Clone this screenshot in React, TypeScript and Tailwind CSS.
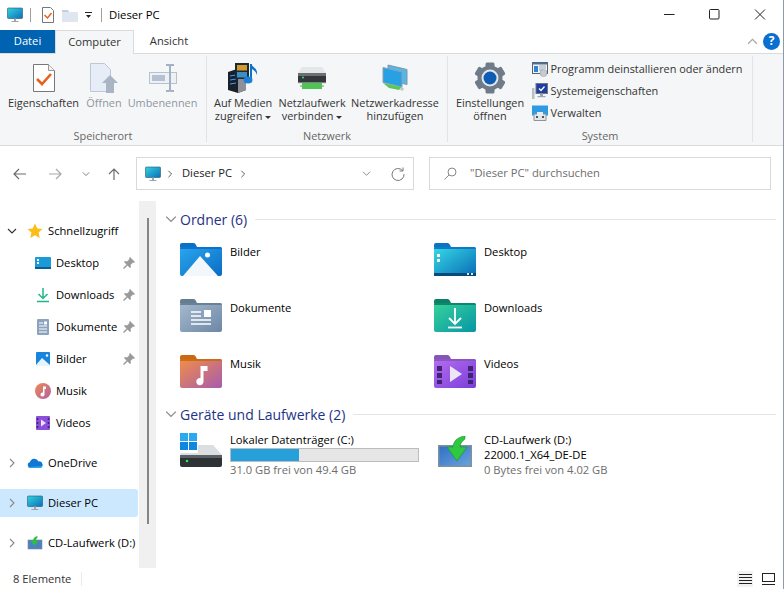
import type { ReactNode } from "react";

const ui = "font-['Open_Sans','Noto_Sans',sans-serif]";

function Monitor({ size = 16 }: { size?: number }) {
  return (
    <svg width={size} height={size} viewBox="0 0 16 16" className="shrink-0">
      <defs>
        <linearGradient id="mon" x1="0" y1="0" x2="1" y2="1">
          <stop offset="0" stopColor="#33d3e0" />
          <stop offset="1" stopColor="#0b6fb8" />
        </linearGradient>
      </defs>
      <rect x="0.5" y="1" width="15" height="10.5" rx="0.8" fill="url(#mon)" stroke="#27566f" strokeWidth="0.6" />
      <rect x="7" y="11.5" width="2" height="2.5" fill="#9aa5ad" />
      <rect x="4.5" y="14" width="7" height="1" fill="#9aa5ad" />
    </svg>
  );
}

function Folder({ tab, from, to, children, id }: { tab: string; from: string; to: string; children?: ReactNode; id: string }) {
  return (
    <svg width="42" height="33" viewBox="0 0 42 33" className="shrink-0">
      <defs>
        <linearGradient id={id} x1="0" y1="0" x2="1" y2="1">
          <stop offset="0" stopColor={from} />
          <stop offset="1" stopColor={to} />
        </linearGradient>
      </defs>
      <path d="M0 2a2 2 0 0 1 2-2h11a3 3 0 0 1 3 2l1 2h-17z" fill={tab} />
      <path d="M0 5a1 1 0 0 1 1-1h39a2 2 0 0 1 2 2v25a2 2 0 0 1-2 2h-38a2 2 0 0 1-2-2z" fill={`url(#${id})`} />
      <path d="M0 5a1 1 0 0 1 1-1h39a2 2 0 0 1 2 2h-42z" fill={tab} opacity="0.9" />
      {children}
    </svg>
  );
}

function Chevron({ dir, color = "#8a8a8a", size = 10 }: { dir: "right" | "down" | "up" | "left"; color?: string; size?: number }) {
  const d = {
    right: "M3 1l4 4-4 4",
    down: "M1 3l4 4 4-4",
    up: "M1 7l4-4 4 4",
    left: "M7 1l-4 4 4 4",
  }[dir];
  return (
    <svg width={size} height={size} viewBox="0 0 10 10" className="shrink-0">
      <path d={d} fill="none" stroke={color} strokeWidth="1.1" />
    </svg>
  );
}

function Caret() {
  return <span className="ml-[3px] inline-block align-middle w-0 h-0 border-x-[3px] border-x-transparent border-t-[3px] border-t-[#333]" />;
}

function BigButton({ icon, lines, dim, caret, width = "" }: { icon: ReactNode; lines: string[]; dim?: boolean; caret?: boolean; width?: string }) {
  return (
    <div className={`flex flex-col items-center ${width} ${dim ? "text-[#8f979f]" : "text-[#333]"}`}>
      <div className="flex h-[32px] w-[32px] items-center justify-center">{icon}</div>
      <div className="mt-[2px] whitespace-nowrap text-center leading-[13px]">
        {lines[0]}
        {lines[1] && (
          <>
            <br />
            {lines[1]}
            {caret && <Caret />}
          </>
        )}
      </div>
    </div>
  );
}

function Group({ label, width, children }: { label: string; width: string; children: ReactNode }) {
  return (
    <div className={`${width} flex h-[86px] flex-col border-r border-[#e1e3e6]`}>
      <div className="flex flex-1 justify-center pt-[6px]">{children}</div>
      <div className="text-center leading-[13px] text-[#666]">{label}</div>
    </div>
  );
}

const PropsIcon = (
  <svg width="22" height="28" viewBox="0 0 22 28">
    <path d="M.5.5h15l6 6v21H.5z" fill="#fff" stroke="#777" />
    <path d="M15.500.5v6h6" fill="#f1f1f1" stroke="#999" />
    <path d="M4 15l5 5 9-10" fill="none" stroke="#e8611a" strokeWidth="2.6" />
  </svg>
);

const OpenIcon = (
  <svg width="28" height="30" viewBox="0 0 28 30">
    <path d="M.5.5h14l6 6v22H.5z" fill="#e6edf7" stroke="#bcc8da" />
    <path d="M12 20l8-8 8 8h-4v10h-8V20z" fill="#a9b5c4" />
  </svg>
);

const RenameIcon = (
  <svg width="28" height="28" viewBox="0 0 28 28">
    <rect x="0.500" y="8.500" width="27" height="11" fill="#edf1f6" stroke="#b7c2d0" />
    <rect x="3" y="11" width="13" height="6" fill="#b4c1d1" />
    <path d="M17 1h3l1 1 1-1h3M21 2v24M17 27h3l1-1 1 1h3" fill="none" stroke="#a4b1c2" strokeWidth="2" />
  </svg>
);

const MediaIcon = (
  <svg width="32" height="30" viewBox="0 0 32 30">
    <path d="M1 9l9-3 9 3v18l-8 3-10-3z" fill="#1b1f29" />
    <path d="M11 30l8-3V13h-8z" fill="#8d9099" />
    <path d="M3 13l6-1M3 17l6-1M3 21l6-1" stroke="#3aa0ff" strokeWidth="1" />
    <rect x="8" y="0" width="14" height="16" fill="#1c2a35" />
    <rect x="10" y="2" width="10" height="5.500" fill="#d39a2e" />
    <rect x="10" y="9" width="10" height="5.500" fill="#3d8ec4" />
    <path d="M24 1v15" stroke="#1272c9" strokeWidth="2" />
    <path d="M24 1c1 3 7 4 6 11-1-3-3-5-5-6z" fill="#1272c9" />
    <ellipse cx="21" cy="17" rx="4.500" ry="3.500" fill="#1c80d8" />
  </svg>
);

const DriveIcon = (
  <svg width="28" height="22" viewBox="0 0 28 22">
    <path d="M4 0h20l4 6H0z" fill="#e4e7e7" />
    <rect x="0" y="6" width="28" height="10" fill="#33373b" />
    <rect x="0" y="6" width="28" height="3" fill="#6a6f74" />
    <circle cx="5" cy="10.500" r="1" fill="#2ee66b" />
    <rect x="0" y="15.500" width="28" height="1" fill="#c8cccf" />
    <rect x="4" y="16" width="20" height="6" fill="#4fc455" />
    <path d="M2 19h2M24 19h2" stroke="#b8bec2" strokeWidth="2" />
  </svg>
);

const NetAddrIcon = (
  <svg width="26" height="28" viewBox="0 0 26 28">
    <path d="M6 1l19 4.500v15L6 16z" fill="#55b6e8" stroke="#7f97a8" />
    <path d="M1 3.500l19 4.500v15L1 18.500z" fill="#27a0e4" stroke="#8ba2b2" />
    <path d="M1 19l6 5 10 2 3-3z" fill="#5ac75c" />
    <circle cx="20" cy="25" r="1.800" fill="#c1c7cc" />
  </svg>
);

const GearIcon = (
  <svg width="32" height="32" viewBox="0 0 32 32">
    {[0, 60, 120, 180, 240, 300].map((a) => (
      <rect key={a} x="11.500" y="0.500" width="9" height="8" rx="1.500" fill="#6f7b88" transform={`rotate(${a} 16 16)`} />
    ))}
    <circle cx="16" cy="16" r="12.500" fill="#6f7b88" />
    <circle cx="16" cy="16" r="8.500" fill="#e3e7ec" />
    <circle cx="16" cy="16" r="6.500" fill="#0f5cb5" />
  </svg>
);

const UninstallIcon = (
  <svg width="16" height="16" viewBox="0 0 16 16">
    <rect x="0.500" y="1.500" width="15" height="11" fill="#f3f6f9" stroke="#56626e" />
    <rect x="0.500" y="1.500" width="15" height="2" fill="#4d6f91" />
    <rect x="2" y="5" width="4" height="6" fill="#2f83d4" />
    <path d="M7 5h7M7 7h7M7 9h4" stroke="#9aa8b5" />
    <circle cx="11.500" cy="12" r="3.500" fill="#c7ccd2" stroke="#8a9199" strokeWidth="0.500" />
  </svg>
);

const SysPropsIcon = (
  <svg width="16" height="16" viewBox="0 0 16 16">
    <rect x="0" y="5" width="2.500" height="11" fill="#b6bfc6" />
    <rect x="4" y="0.500" width="11.500" height="10" fill="#1f3ea3" stroke="#6e7780" />
    <path d="M7 5.500l2 2 3.500-4" fill="none" stroke="#fff" strokeWidth="1.300" />
    <rect x="8" y="10.500" width="3" height="2.500" fill="#9aa5ad" />
    <rect x="5.500" y="13" width="8" height="1.200" fill="#9aa5ad" />
  </svg>
);

const ManageIcon = (
  <svg width="16" height="16" viewBox="0 0 16 16">
    <rect x="0" y="0.500" width="16" height="10" fill="#2d9be3" />
    <path d="M2 9h12v6.500H2z" fill="#e3e6e9" stroke="#8d949b" />
    <path d="M5 7h6v4H5z" fill="#e9ecef" />
    <rect x="4" y="11" width="2" height="2" fill="#555" />
    <rect x="10" y="11" width="2" height="2" fill="#555" />
  </svg>
);

function SmallAction({ icon, label }: { icon: ReactNode; label: string }) {
  return (
    <div className="flex h-[22px] items-center gap-[3px] whitespace-nowrap text-[#333]">
      {icon}
      <span>{label}</span>
    </div>
  );
}

function SideRow({ icon, label, indent, expander, pinned, active }: { icon: ReactNode; label: string; indent?: boolean; expander?: "open" | "closed"; pinned?: boolean; active?: boolean }) {
  return (
    <div className={`flex h-[28px] items-center overflow-hidden rounded-r-[3px] ${active ? "bg-[#cce8ff]" : ""}`}>
      <span className="flex w-[27px] shrink-0 justify-center pr-[3px]">
        {expander === "open" && <Chevron dir="down" color="#333" />}
        {expander === "closed" && <Chevron dir="right" />}
      </span>
      <span className={`flex min-w-0 flex-1 items-center gap-[5px] ${indent ? "pl-[8px]" : ""}`}>
        {icon}
        <span className="flex-1 whitespace-nowrap text-black">{label}</span>
      </span>
      {pinned && (
        <svg width="12" height="12" viewBox="0 0 12 12" className="mr-[3px] shrink-0">
          <path d="M7 0l5 5-1 1-1-.5-2.500 2.500.5 2-1 1-2.500-2.500L1 12 0 11l3.500-3.500L1 5l1-1 2 .5L6.500 2 6 1z" fill="#9a9a9a" />
        </svg>
      )}
    </div>
  );
}

function SectionHead({ label }: { label: string }) {
  return (
    <div className="flex h-[20px] items-center">
      <Chevron dir="down" size={12} color="#8a8a8a" />
      <span className="ml-[3px] whitespace-nowrap text-[14px] text-[#1e3287]">{label}</span>
      <span className="ml-[8px] h-[1px] flex-1 bg-[#e5e5e5]" />
    </div>
  );
}

function Tile({ icon, label }: { icon: ReactNode; label: string }) {
  return (
    <div className="flex items-start gap-[8px]">
      {icon}
      <span className="mt-[1px] text-black">{label}</span>
    </div>
  );
}

export default function App() {
  return (
    <div className={`${ui} flex h-[589px] w-[784px] flex-col overflow-hidden border-r border-[#8f9aa5] bg-white text-[10.9px]`}>
      {/* titelleiste */}
      <div className="flex h-[30px] items-center pl-[7px]">
        <Monitor />
        <span className="ml-[7px] h-[14px] w-[1px] bg-[#a0a0a0]" />
        <svg width="12" height="16" viewBox="0 0 12 16" className="ml-[11px]">
          <path d="M.5.5h8l3 3v12H.5z" fill="#fff" stroke="#777" />
          <path d="M2.500 8l3 3 4-5" fill="none" stroke="#e8611a" strokeWidth="1.500" />
        </svg>
        <svg width="16" height="13" viewBox="0 0 16 13" className="ml-[8px]">
          <path d="M0 1h6l1 2h9v10H0z" fill="#dfe6f0" />
          <path d="M0 1h6l1 2H0z" fill="#c5d0de" />
        </svg>
        <svg width="8" height="7" viewBox="0 0 8 7" className="ml-[7px]">
          <path d="M0 0h7v1H0z" fill="#222" />
          <path d="M1 3h5L3.500 6z" fill="#222" />
        </svg>
        <span className="ml-[8px] h-[14px] w-[1px] bg-[#a0a0a0]" />
        <span className="ml-[7px] text-[11.300px] text-black">Dieser PC</span>
        <span className="flex-1" />
        <svg width="112" height="12" viewBox="0 0 112 12" className="mb-[2px] mr-[7px]">
          <path d="M0 6.500h10.500" stroke="#222" />
          <rect x="45.500" y="1.500" width="9.500" height="9.500" rx="1" fill="none" stroke="#222" />
          <path d="M91 1.500l10 10M101 1.500l-10 10" stroke="#222" />
        </svg>
      </div>

      {/* tabs */}
      <div className="relative flex h-[24px] items-stretch border-b border-[#dadbdc] text-[11.200px]">
        <div className="flex w-[55px] items-center justify-center bg-[#0063b1] text-white">Datei</div>
        <div className="relative z-10 -mb-[1px] flex w-[79px] items-center justify-center border-x border-t border-[#dadbdc] bg-[#f5f6f7] text-[#333]">Computer</div>
        <div className="flex w-[70px] items-center justify-center text-[#333]">Ansicht</div>
        <span className="flex-1" />
        <div className="mb-[1px] mr-[3px] flex items-center gap-[5px]">
          <Chevron dir="up" color="#a8a8a8" size={11} />
          <span className="flex h-[17px] w-[17px] items-center justify-center rounded-full bg-[#0b6fd0] text-[12px] font-bold text-white">?</span>
        </div>
      </div>

      {/* ribbon */}
      <div className="flex h-[92px] border-b border-[#dadbdc] bg-[#f5f6f7] pt-[2px]">
        <Group label="Speicherort" width="w-[207px]">
          <div className="flex gap-[6px] pr-[2px]">
            <BigButton icon={PropsIcon} lines={["Eigenschaften"]} width="w-[73px]" />
            <BigButton icon={OpenIcon} lines={["Öffnen"]} width="w-[36px]" dim />
            <BigButton icon={RenameIcon} lines={["Umbenennen"]} width="w-[69px]" dim />
          </div>
        </Group>
        <Group label="Netzwerk" width="w-[241px]">
          <div className="flex gap-[5px] pr-[2px]">
            <BigButton icon={MediaIcon} lines={["Auf Medien", "zugreifen"]} width="w-[60px]" caret />
            <BigButton icon={DriveIcon} lines={["Netzlaufwerk", "verbinden"]} width="w-[68px]" caret />
            <BigButton icon={NetAddrIcon} lines={["Netzwerkadresse", "hinzufügen"]} />
          </div>
        </Group>
        <Group label="System" width="w-[305px]">
          <div className="flex gap-[6px] pr-[3px]">
            <BigButton icon={GearIcon} lines={["Einstellungen", "öffnen"]} width="w-[71px]" />
            <div className="-mt-[4px] flex flex-col">
              <SmallAction icon={UninstallIcon} label="Programm deinstallieren oder ändern" />
              <SmallAction icon={SysPropsIcon} label="Systemeigenschaften" />
              <SmallAction icon={ManageIcon} label="Verwalten" />
            </div>
          </div>
        </Group>
      </div>

      {/* adresszeile */}
      <div className="flex h-[55px] items-center pl-[12px] pr-[12px] text-[11.200px]">
        <svg width="16" height="14" viewBox="0 0 16 14" className="shrink-0">
          <path d="M14 7H2M7 2L2 7l5 5" fill="none" stroke="#6d6d6d" strokeWidth="1.200" />
        </svg>
        <svg width="16" height="14" viewBox="0 0 16 14" className="ml-[19px] shrink-0">
          <path d="M2 7h12M9 2l5 5-5 5" fill="none" stroke="#a8a8a8" strokeWidth="1.200" />
        </svg>
        <span className="ml-[19px]">
          <Chevron dir="down" color="#6d6d6d" size={8} />
        </span>
        <svg width="14" height="14" viewBox="0 0 14 14" className="ml-[17px] shrink-0">
          <path d="M7 13V2M2 7l5-5 5 5" fill="none" stroke="#6d6d6d" strokeWidth="1.200" />
        </svg>
        <div className="ml-[15px] flex h-[33px] w-[278px] shrink-0 items-center border border-[#d9d9d9] pl-[8px] pr-[7px]">
          <Monitor />
          <span className="ml-[5px]">
            <Chevron dir="right" color="#444" size={8} />
          </span>
          <span className="ml-[8px] text-[#222]">Dieser PC</span>
          <span className="ml-[7px]">
            <Chevron dir="right" color="#444" size={8} />
          </span>
          <span className="flex-1" />
          <Chevron dir="down" color="#8a8a8a" size={9} />
          <svg width="14" height="14" viewBox="0 0 14 14" className="ml-[20px] mr-[1px]">
            <path d="M11.500 3.500A6 6 0 1 0 13 7M12 .5v3.500H8.500" fill="none" stroke="#777" />
          </svg>
        </div>
        <div className="ml-[15px] flex h-[33px] flex-1 items-center border border-[#d9d9d9] pl-[14px] text-[#6d6d6d]">
          <svg width="13" height="13" viewBox="0 0 13 13">
            <circle cx="8" cy="5" r="4" fill="none" stroke="#888" />
            <path d="M5 8l-4.500 4.500" stroke="#888" />
          </svg>
          <span className="ml-[13px]">"Dieser PC" durchsuchen</span>
        </div>
      </div>

      {/* hauptbereich */}
      <div className="flex min-h-0 flex-1 text-[11.200px]">
        <nav className="flex w-[139px] shrink-0 flex-col pr-[1px] pt-[16px]">
          <div className="flex flex-col gap-[4px]">
            <SideRow
              expander="open"
              label="Schnellzugriff"
              icon={
                <svg width="16" height="16" viewBox="0 0 16 16" className="shrink-0">
                  <path d="M8 .5l2.300 5 5.200.6-3.900 3.500 1.100 5.400L8 12.300 3.300 15l1.100-5.400L.5 6.100l5.200-.6z" fill="#fcbc19" />
                </svg>
              }
            />
            <SideRow
              indent
              pinned
              label="Desktop"
              icon={
                <svg width="16" height="12" viewBox="0 0 16 12" className="shrink-0">
                  <rect width="16" height="12" rx="1" fill="#1a9ad6" />
                  <rect y="10" width="16" height="2" fill="#0b5c8f" />
                  <rect x="2" y="2" width="2" height="2" fill="#fff" />
                  <rect x="2" y="5" width="2" height="2" fill="#fff" />
                </svg>
              }
            />
            <SideRow
              indent
              pinned
              label="Downloads"
              icon={
                <svg width="16" height="16" viewBox="0 0 16 16" className="shrink-0">
                  <path d="M8 1v10M3.500 7L8 11.500 12.500 7" fill="none" stroke="#22b58c" strokeWidth="1.500" />
                  <path d="M2 14.500h12" stroke="#22b58c" strokeWidth="1.500" />
                </svg>
              }
            />
            <SideRow
              indent
              pinned
              label="Dokumente"
              icon={
                <svg width="16" height="16" viewBox="0 0 16 16" className="shrink-0">
                  <rect x="2" width="12" height="16" rx="1" fill="#8ba3bf" />
                  <path d="M4 4h4M4 7h8M4 10h8M4 13h8" stroke="#fff" />
                  <rect x="9" y="2.500" width="3" height="3" fill="#fff" />
                </svg>
              }
            />
            <SideRow
              indent
              pinned
              label="Bilder"
              icon={
                <svg width="16" height="16" viewBox="0 0 16 16" className="shrink-0">
                  <rect x="1" y="1" width="14" height="14" rx="1" fill="#1785de" />
                  <path d="M1 14l6-7 8 7v1H1z" fill="#e8f4fc" />
                  <circle cx="12" cy="4.500" r="1.200" fill="#fff" />
                </svg>
              }
            />
            <SideRow
              indent
              label="Musik"
              icon={
                <svg width="16" height="16" viewBox="0 0 16 16" className="shrink-0">
                  <defs>
                    <linearGradient id="mus" x1="0" y1="0" x2="1" y2="1">
                      <stop offset="0" stopColor="#f08a4f" />
                      <stop offset="1" stopColor="#b05fa8" />
                    </linearGradient>
                  </defs>
                  <circle cx="8" cy="8" r="8" fill="url(#mus)" />
                  <path d="M8 3.500h3V6H9.500v5.500a2 2 0 1 1-1.500-1.900z" fill="#fff" />
                </svg>
              }
            />
            <SideRow
              indent
              label="Videos"
              icon={
                <svg width="16" height="16" viewBox="0 0 16 16" className="shrink-0">
                  <rect x="1" y="1" width="14" height="14" rx="1" fill="#8c4fd9" />
                  <path d="M6 4.500l5 3.500-5 3.500z" fill="#ece4fb" />
                  <path d="M2.500 3v2M2.500 7v2M2.500 11v2M13.500 3v2M13.500 7v2M13.500 11v2" stroke="#3e2377" strokeWidth="1.500" />
                </svg>
              }
            />
          </div>
          <div className="mt-[12px] flex flex-col gap-[12px]">
            <SideRow
              expander="closed"
              label="OneDrive"
              icon={
                <svg width="16" height="16" viewBox="0 0 16 16" className="shrink-0">
                  <path d="M3.500 13A3 3 0 0 1 3 7.100 4.500 4.500 0 0 1 11.500 6.500 3.300 3.300 0 0 1 13 13z" fill="#0f78d4" />
                  <path d="M1 12a3 3 0 0 0 2.500 1H13a3 3 0 0 0 2.500-2z" fill="#2ca4e8" />
                </svg>
              }
            />
            <SideRow expander="closed" active label="Dieser PC" icon={<Monitor />} />
            <SideRow
              expander="closed"
              label="CD-Laufwerk (D:)"
              icon={
                <svg width="16" height="16" viewBox="0 0 16 16" className="shrink-0">
                  <rect x="1" y="5" width="14" height="9" fill="#4a82c0" stroke="#7e8d9a" strokeWidth="0.600" />
                  <path d="M10.500 1C7.500 1.500 6 3.500 6 6H3.500L7.500 10.500 11.500 6H9c0-1.500.5-2.500 1.500-3.500z" fill="#2fbe3e" />
                </svg>
              }
            />
          </div>
        </nav>

        {/* scrollbar */}
        <div className="flex w-[17px] shrink-0 flex-col items-center bg-[#f0f0f0] pb-[44px] pt-[17px]">
          <div className="w-[2px] flex-1 bg-[#858585]" />
        </div>

        <main className="min-w-0 flex-1 pl-[9px] pr-[7px] pt-[8px]">
          <SectionHead label="Ordner (6)" />
          <div className="mt-[14px] grid grid-cols-[254px_1fr] grid-rows-[56px_56px_49px] pl-[15px]">
            <Tile
              label="Bilder"
              icon={
                <Folder id="f1" tab="#0a6fc9" from="#2aa6ee" to="#0a6cc4">
                  <path d="M3 33L20 13l18 20z" fill="#f1f7fb" />
                  <circle cx="27.500" cy="12" r="2.500" fill="#fff" />
                </Folder>
              }
            />
            <Tile
              label="Desktop"
              icon={
                <Folder id="f2" tab="#0b72c6" from="#35dbe6" to="#0b6bb6">
                  <rect x="3" y="11" width="3" height="3" fill="#fff" />
                  <rect x="3" y="16" width="3" height="3" fill="#fff" />
                  <rect y="30" width="42" height="3" fill="#0a4a78" />
                  <rect x="33" y="30" width="2" height="2" fill="#d7e7f0" />
                  <rect x="37" y="30" width="2" height="2" fill="#d7e7f0" />
                </Folder>
              }
            />
            <Tile
              label="Dokumente"
              icon={
                <Folder id="f3" tab="#647d90" from="#a5bad0" to="#6c87a5">
                  <path d="M11 13h10M11 17h10M11 21h20M11 25h20" stroke="#fff" strokeWidth="1.700" />
                  <rect x="24" y="11" width="7" height="7" fill="#fff" />
                </Folder>
              }
            />
            <Tile
              label="Downloads"
              icon={
                <Folder id="f4" tab="#0c7f68" from="#37d39a" to="#0696a5">
                  <path d="M21 9v16M15 19l6 6 6-6" fill="none" stroke="#fff" strokeWidth="1.800" />
                  <path d="M14 28.500h14" stroke="#fff" strokeWidth="1.800" />
                </Folder>
              }
            />
            <Tile
              label="Musik"
              icon={
                <Folder id="f5" tab="#c96a10" from="#f28d47" to="#a65cb0">
                  <path d="M20.500 11h7v5h-4v10.500a3.600 3.600 0 1 1-3-3.500z" fill="#fff" />
                </Folder>
              }
            />
            <Tile
              label="Videos"
              icon={
                <Folder id="f6" tab="#8556b8" from="#b66cf0" to="#7a3fd8">
                  <path d="M16 11l12 8-12 8z" fill="#ece7f7" />
                  <path d="M5.500 11v5M5.500 18v5M5.500 25v4M36.500 11v5M36.500 18v5M36.500 25v4" stroke="#3f2474" strokeWidth="5" />
                </Folder>
              }
            />
          </div>

          <SectionHead label="Geräte und Laufwerke (2)" />

          <div className="mt-[9px] grid grid-cols-[254px_1fr] pl-[15px]">
            <div className="flex gap-[8px]">
              <svg width="42" height="34" viewBox="0 0 42 34" className="shrink-0">
                <rect x="0" y="0" width="8" height="8" fill="#2aa9f0" />
                <rect x="9" y="0" width="8" height="8" fill="#2aa9f0" />
                <rect x="0" y="9" width="8" height="8" fill="#0f86e0" />
                <rect x="9" y="9" width="8" height="8" fill="#0f86e0" />
                <path d="M18 12h15l9 10H0l1-2h17z" fill="#dcdfe1" />
                <path d="M0 22h42v10a2 2 0 0 1-2 2H2a2 2 0 0 1-2-2z" fill="#2e3235" />
                <path d="M0 22h42v3H0z" fill="#5b6065" />
                <circle cx="7" cy="28" r="1.300" fill="#2ee66b" />
              </svg>
              <div className="flex w-[190px] flex-col leading-[16px]">
                <span className="-mt-[1px] text-black">Lokaler Datenträger (C:)</span>
                <div className="h-[14px] w-[189px] border border-[#bcbcbc] bg-[#e6e6e6]">
                  <div className="h-full w-[68px] bg-[#26a0da]" />
                </div>
                <span className="text-[#6d6d6d]">31.0 GB frei von 49.4 GB</span>
              </div>
            </div>
            <div className="flex gap-[12px]">
              <svg width="34" height="31" viewBox="0 0 34 31" className="ml-[4px] mt-[3px] shrink-0">
                <defs>
                  <linearGradient id="cdb" x1="0" y1="0" x2="1" y2="1">
                    <stop offset="0" stopColor="#2f6fc4" />
                    <stop offset="1" stopColor="#6aa3dc" />
                  </linearGradient>
                </defs>
                <rect x="0.750" y="9.750" width="32.500" height="20.500" fill="url(#cdb)" stroke="#7e919f" strokeWidth="1.500" />
                <path d="M27 0C19 1 15 6 15 11H9l10 14 10-14h-7c0-3 2-6 5-8z" fill="#2ec940" stroke="#1b8f2a" strokeWidth="0.600" />
              </svg>
              <div className="flex flex-col leading-[15px]">
                <span className="-mt-[1px] text-black">CD-Laufwerk (D:)</span>
                <span className="text-black">22000.1_X64_DE-DE</span>
                <span className="text-[#6d6d6d]">0 Bytes frei von 4.02 GB</span>
              </div>
            </div>
          </div>
        </main>
      </div>

      {/* statusleiste */}
      <div className="flex h-[21px] shrink-0 items-center pl-[13px] pr-[7px] pt-[1px] text-[11.200px] text-[#333]">
        <span>8 Elemente</span>
        <span className="ml-[10px] h-[14px] w-[1px] bg-[#ececec]" />
        <span className="flex-1" />
        <span className="flex h-[16px] w-[16px] items-center justify-center bg-[#f2f2f2]">
          <svg width="13" height="10" viewBox="0 0 13 10">
            <path d="M0 .5h13M0 3.500h13M0 6.500h13M0 9.500h13" stroke="#222" />
          </svg>
        </span>
        <span className="ml-[7px] flex h-[16px] w-[16px] items-center justify-center">
          <svg width="13" height="12" viewBox="0 0 13 12">
            <rect x="0.500" y="0.500" width="12" height="8" fill="none" stroke="#222" />
            <path d="M0 11.500h13" stroke="#222" />
          </svg>
        </span>
      </div>
    </div>
  );
}
